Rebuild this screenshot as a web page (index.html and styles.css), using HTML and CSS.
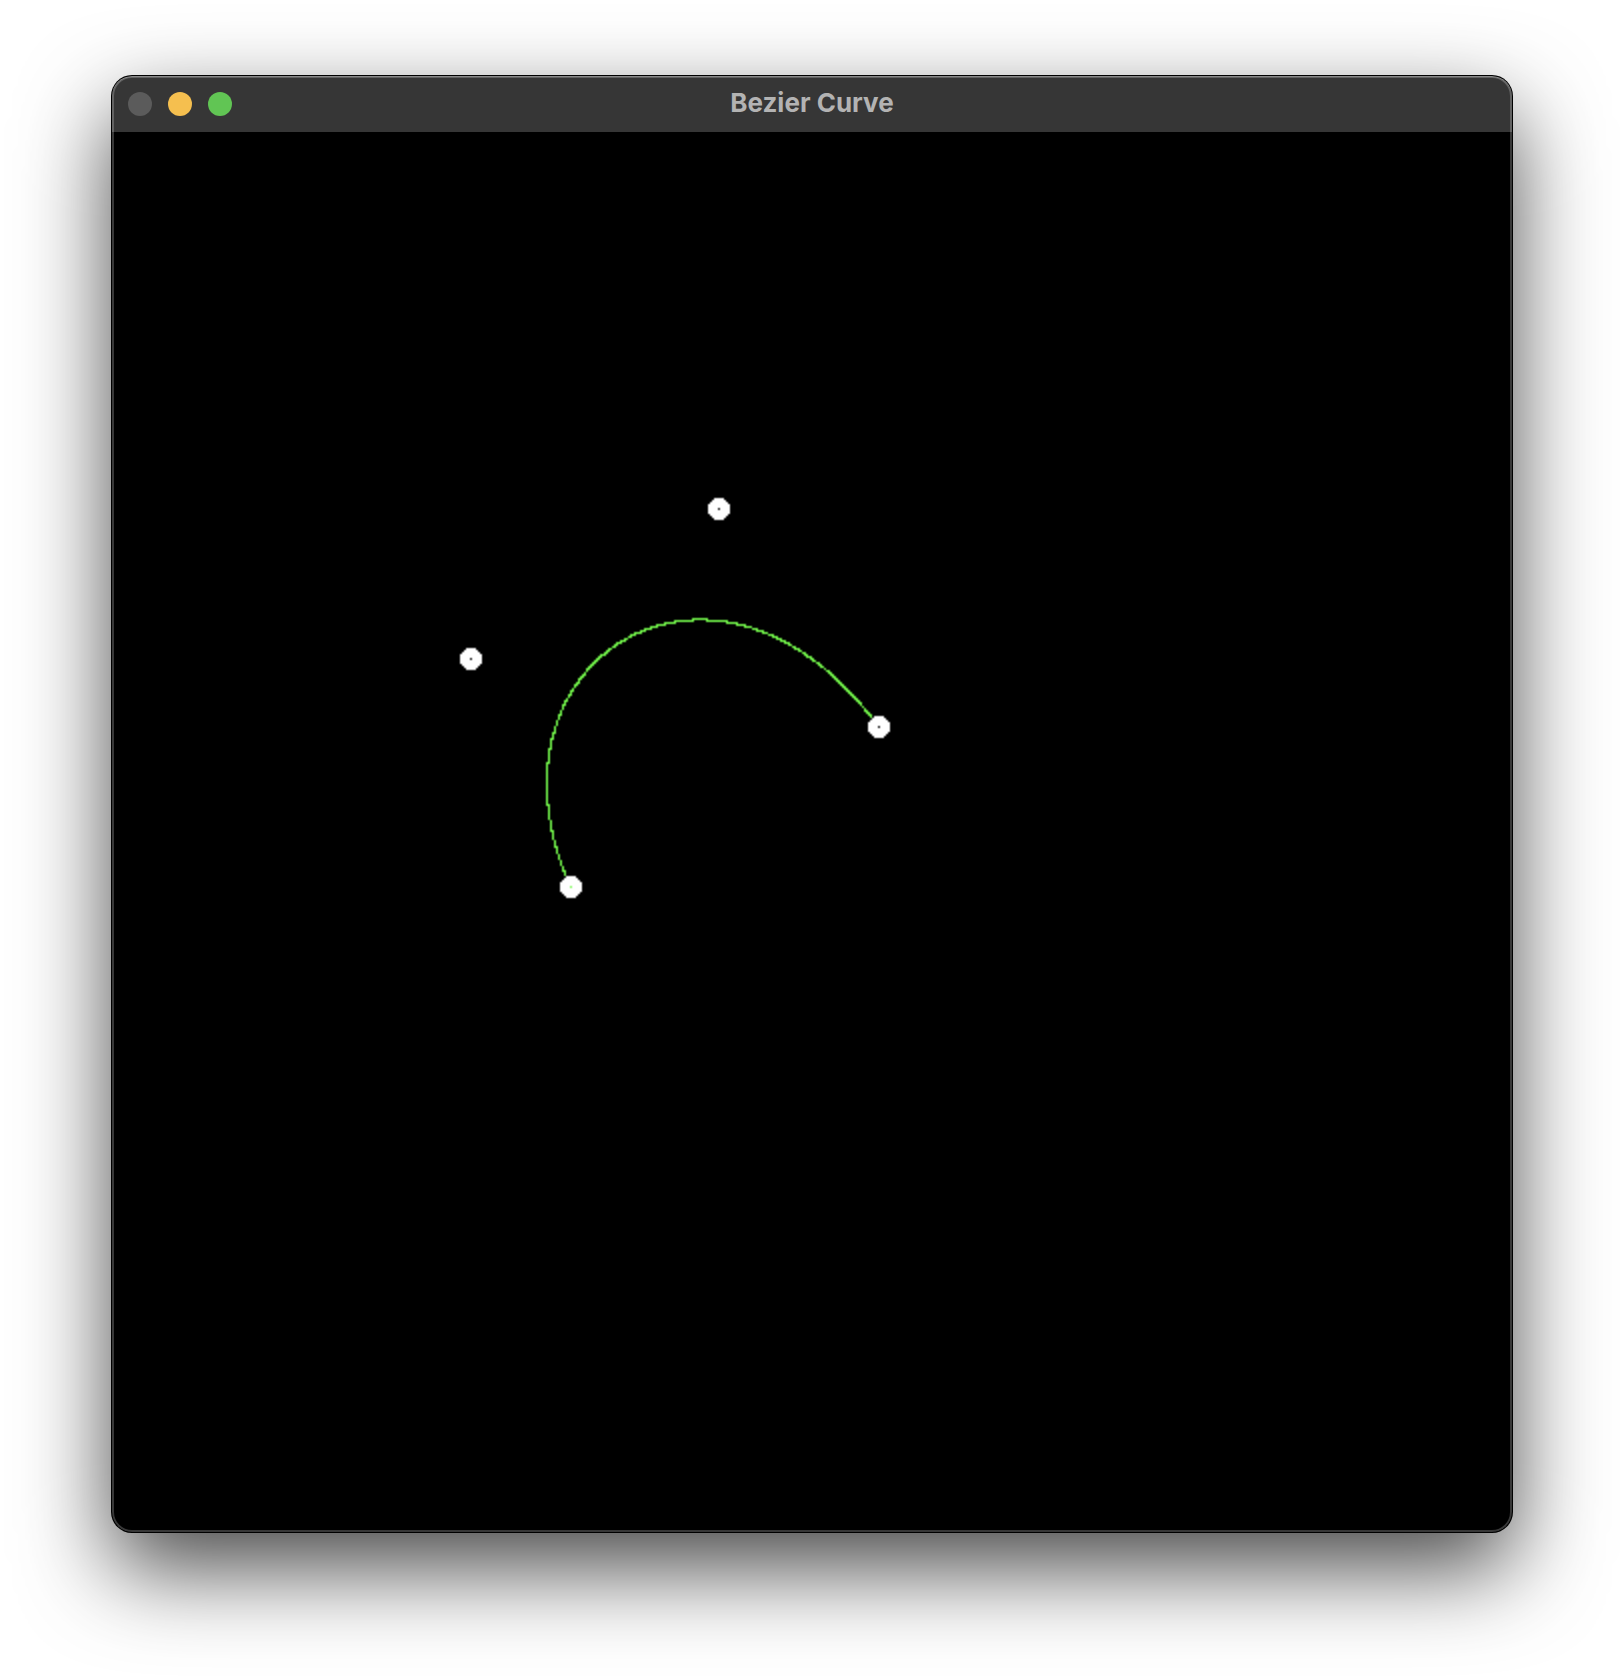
FILE: index.html
```html
<!DOCTYPE html>
<html lang="en">
<head>
<meta charset="utf-8">
<title>Bezier Curve</title>
<link rel="stylesheet" href="styles.css">
</head>
<body>
<main class="window">
  <header class="titlebar">
    <div class="controls">
      <button class="control control-close" type="button" aria-label="Close" disabled></button>
      <button class="control control-minimize" type="button" aria-label="Minimize"></button>
      <button class="control control-zoom" type="button" aria-label="Zoom"></button>
    </div>
    <h1 class="title">Bezier Curve</h1>
  </header>
  <canvas class="plot" id="plot" width="700" height="700" role="img" aria-label="Cubic Bezier curve with four control points"></canvas>
</main>
<script src="curve.js"></script>
</body>
</html>
```
FILE: styles.css
```css
* {
  box-sizing: border-box;
}

body {
  margin: 0;
  padding: 76px 112px 148px;
  background: #fff;
  font-family: Inter, "Liberation Sans", sans-serif;
}

.window {
  position: relative;
  overflow: hidden;
  border-radius: 20px;
  background: #000;
  box-shadow: 0 0 0 1px #000, 0 36px 90px rgba(0, 0, 0, 0.72);
}

/* Light rim drawn over the window content */
.window::after {
  content: "";
  position: absolute;
  inset: 0;
  border-radius: 20px;
  box-shadow: inset 0 1px 0 rgba(255, 255, 255, 0.25), inset 0 0 0 2px rgba(255, 255, 255, 0.22);
  pointer-events: none;
}

.titlebar {
  display: grid;
  grid-template-columns: 1fr auto 1fr;
  align-items: center;
  height: 56px;
  padding: 0 16px;
  background: #363636;
}

.controls {
  display: flex;
  gap: 16px;
}

.control {
  width: 24px;
  height: 24px;
  padding: 0;
  border: 0;
  border-radius: 50%;
}

.control-close {
  background: #5b5b5b;
}

.control-minimize {
  background: #f5bf4f;
}

.control-zoom {
  background: #61c554;
}

.title {
  margin: 0;
  padding-bottom: 2px;
  color: #b3b3b3;
  font-size: 26px;
  font-weight: 700;
  line-height: 32px;
}

.plot {
  display: block;
  width: 100%;
  aspect-ratio: 1;
}
```
FILE: curve.js
```js
const ctx = document.getElementById("plot").getContext("2d");
const points = [[229, 377], [179, 263], [303, 188], [383, 297]];
const steps = 1000;

// Width of each row of a control point marker, top to bottom
const markerRows = [5, 7, 9, 11, 11, 11, 11, 11, 9, 7, 5];

ctx.fillStyle = "#000";
ctx.fillRect(0, 0, 700, 700);

function bezier(t, axis) {
  const u = 1 - t;
  return u * u * u * points[0][axis]
    + 3 * u * u * t * points[1][axis]
    + 3 * u * t * t * points[2][axis]
    + t * t * t * points[3][axis];
}

for (const [x, y] of points) {
  ctx.fillStyle = "#fff";
  markerRows.forEach((width, row) => {
    ctx.fillRect(x - (width - 1) / 2, y - 5 + row, width, 1);
  });
  ctx.fillStyle = "#000";
  ctx.fillRect(x, y, 1, 1);
}

// The curve goes behind the markers and shows only in their centres
ctx.fillStyle = "#75fb4c";
for (let i = 0; i < steps; i++) {
  const x = Math.floor(bezier(i / steps, 0));
  const y = Math.floor(bezier(i / steps, 1));
  const covered = points.some(([px, py]) => {
    const dx = Math.abs(x - px);
    const dy = Math.abs(y - py);
    return dx + dy > 0 && dx <= 5 && dy <= 5 && dx + dy <= 7;
  });
  if (!covered) ctx.fillRect(x, y, 1, 1);
}
```
